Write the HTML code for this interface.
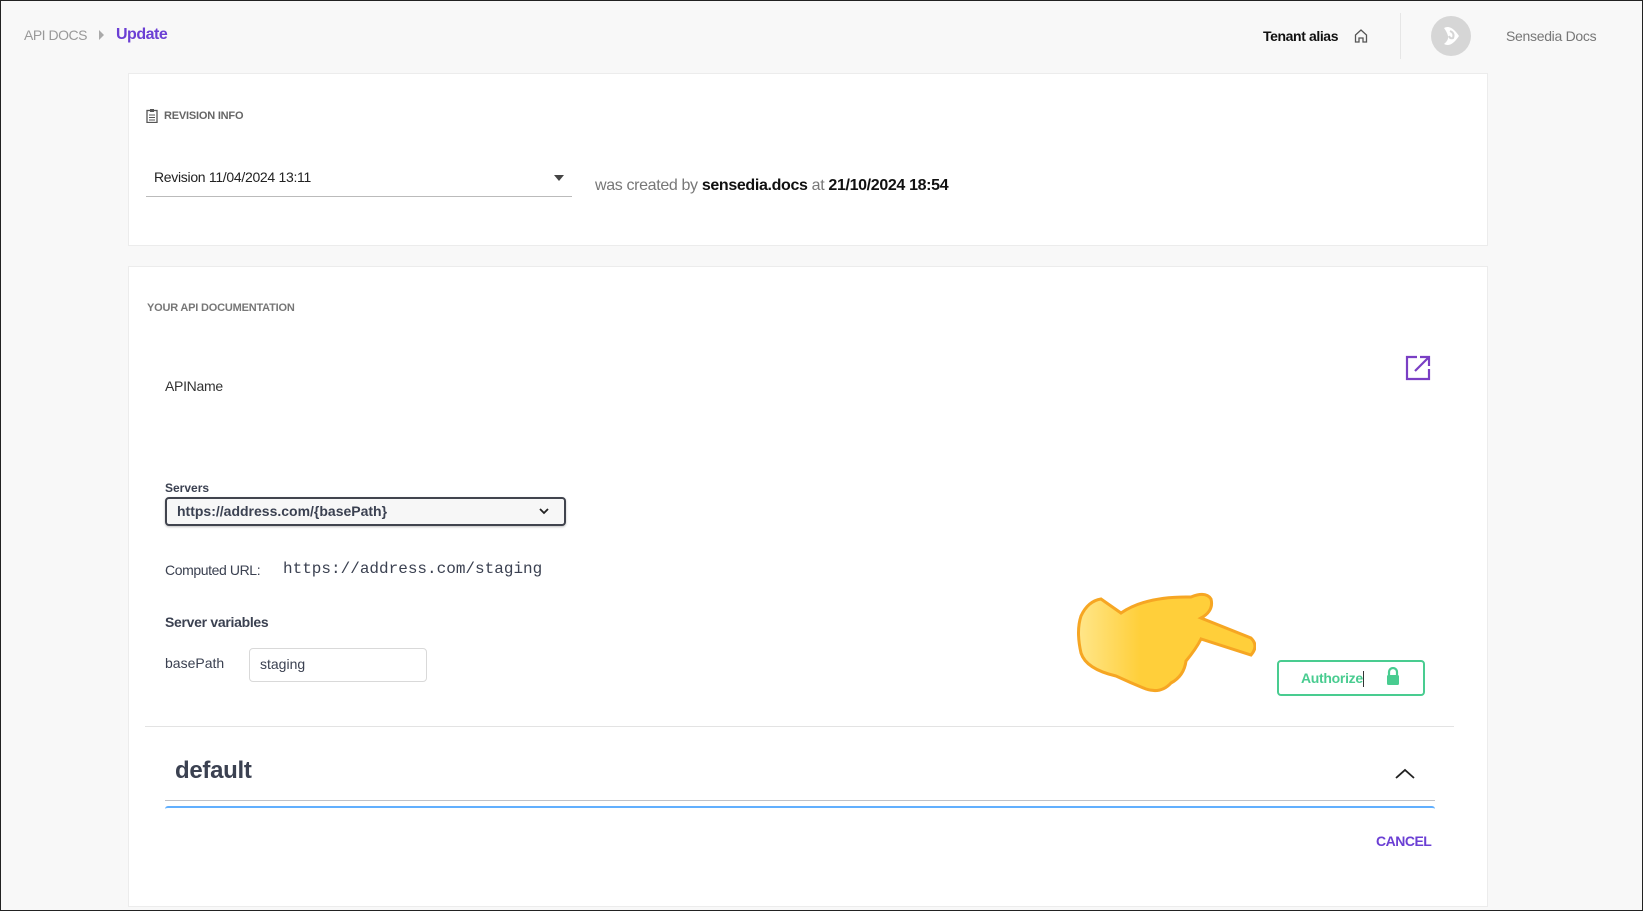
<!DOCTYPE html>
<html><head><meta charset="utf-8"><style>
*{margin:0;padding:0;box-sizing:border-box}
body{width:1643px;height:911px;background:#f8f8f8;font-family:"Liberation Sans",Arial,sans-serif;position:relative;overflow:hidden;border:1px solid #222}
.a{position:absolute;white-space:nowrap}
.card{position:absolute;background:#fff;border:1px solid #ececec}
</style></head><body>
<div class="a" style="left:23px;top:26px;font-size:14px;color:#999;letter-spacing:-0.5px">API DOCS</div>
<svg class="a" style="left:97px;top:29px" width="8" height="10"><path d="M1 0 L6 5 L1 10Z" fill="#aaa"/></svg>
<div class="a" style="left:115px;top:25px;font-size:16px;font-weight:bold;color:#6b3fd4;letter-spacing:-0.5px">Update</div>
<div class="a" style="left:1262px;top:27px;font-size:14px;font-weight:bold;color:#111;letter-spacing:-0.4px">Tenant alias</div>
<svg class="a" style="left:1352px;top:27px" width="16" height="16" viewBox="0 0 16 16"><path d="M2.5 7 L8 2 L13.5 7 V14 H10 V10 H6 V14 H2.5Z" fill="none" stroke="#555" stroke-width="1.3"/></svg>
<div class="a" style="left:1399px;top:12px;width:1px;height:46px;background:#e6e6e6"></div>
<svg class="a" style="left:1430px;top:15px" width="40" height="40" viewBox="0 0 40 40"><circle cx="20" cy="20" r="20" fill="#d6d6d6"/><path d="M13 12 Q20 8 28 20 Q20 32 13 28 Q18 24 17 20 Q16 16 13 12Z" fill="#fff"/><path d="M19 15 Q24 17 22 22 Q19 23 18 20" fill="none" stroke="#d6d6d6" stroke-width="2"/></svg>
<div class="a" style="left:1505px;top:27px;font-size:14px;color:#777;letter-spacing:-0.3px">Sensedia Docs</div>

<div class="card" style="left:127px;top:72px;width:1360px;height:173px"></div>
<svg class="a" style="left:145px;top:108px" width="12" height="14" viewBox="0 0 12 14"><rect x="1" y="1.5" width="10" height="12" fill="none" stroke="#555" stroke-width="1.3"/><rect x="4" y="0" width="4" height="3" fill="#555"/><path d="M3 6h6M3 8.5h6M3 11h6" stroke="#555"/></svg>
<div class="a" style="left:163px;top:109px;font-size:11px;font-weight:bold;color:#666;letter-spacing:-0.2px">REVISION INFO</div>
<div class="a" style="left:153px;top:168px;font-size:14px;color:#222;letter-spacing:-0.3px">Revision 11/04/2024 13:11</div>
<svg class="a" style="left:553px;top:174px" width="10" height="6"><path d="M0 0H10L5 6Z" fill="#444"/></svg>
<div class="a" style="left:145px;top:195px;width:426px;height:1px;background:#bbb"></div>
<div class="a" style="left:594px;top:176px;font-size:16px;color:#777;letter-spacing:-0.35px">was created by <b style="color:#111">sensedia.docs</b> at <b style="color:#111">21/10/2024 18:54</b></div>

<div class="card" style="left:127px;top:265px;width:1360px;height:641px"></div>
<div class="a" style="left:146px;top:301px;font-size:11px;font-weight:bold;color:#777;letter-spacing:-0.2px">YOUR API DOCUMENTATION</div>
<svg class="a" style="left:1404px;top:354px" width="26" height="26" viewBox="0 0 26 26"><path d="M12 2H2V24H24V14" fill="none" stroke="#7a3fc4" stroke-width="2.2"/><path d="M10 16L23 3M15 2H24V11" fill="none" stroke="#7a3fc4" stroke-width="2.2"/></svg>
<div class="a" style="left:164px;top:377px;font-size:14px;color:#333;letter-spacing:-0.3px">APIName</div>

<div class="a" style="left:164px;top:480px;font-size:12px;font-weight:bold;color:#3b4151">Servers</div>
<div class="a" style="left:164px;top:496px;width:401px;height:29px;border:2px solid #41444e;border-radius:4px;background:#f7f7f7;box-shadow:0 1px 2px rgba(0,0,0,.25)"></div>
<div class="a" style="left:176px;top:502px;font-size:14px;font-weight:bold;color:#3b4151">https://address.com/{basePath}</div>
<svg class="a" style="left:538px;top:507px" width="10" height="7"><path d="M1 1L5 5L9 1" fill="none" stroke="#222" stroke-width="1.8"/></svg>
<div class="a" style="left:164px;top:561px;font-size:14px;color:#3b4151;letter-spacing:-0.4px">Computed URL:</div>
<div class="a" style="left:282px;top:559px;font-family:'Liberation Mono',monospace;font-size:16px;color:#3b4151">https://address.com/staging</div>
<div class="a" style="left:164px;top:613px;font-size:14px;font-weight:bold;color:#3b4151;letter-spacing:-0.3px">Server variables</div>
<div class="a" style="left:164px;top:654px;font-size:14px;color:#3b4151">basePath</div>
<div class="a" style="left:248px;top:647px;width:178px;height:34px;border:1px solid #d9d9d9;border-radius:4px;background:#fff"></div>
<div class="a" style="left:259px;top:655px;font-size:14px;color:#3b4151">staging</div>

<svg class="a" style="left:1075px;top:590px" width="180" height="105" viewBox="0 0 180 105"><defs><linearGradient id="g" x1="0" x2="1"><stop offset="0" stop-color="#ffe68a"/><stop offset=".35" stop-color="#ffcf3a"/></linearGradient></defs><path d="M25 8 L45 22 Q70 5 115 6 Q130 0 135 8 Q138 20 125 27 L175 47 Q183 55 175 64 L125 48 Q120 58 110 70 Q108 85 95 92 Q85 103 70 98 Q55 92 40 85 Q10 78 5 62 Q0 40 5 25 Q12 10 25 8Z" fill="url(#g)" stroke="#f6a623" stroke-width="3"/></svg>

<div class="a" style="left:1276px;top:659px;width:148px;height:36px;border:2px solid #49cc90;border-radius:4px"></div>
<div class="a" style="left:1300px;top:669px;font-size:14px;font-weight:bold;color:#49cc90;letter-spacing:-0.3px">Authorize</div>
<div class="a" style="left:1362px;top:670px;width:1px;height:16px;background:#333"></div>
<svg class="a" style="left:1385px;top:666px" width="14" height="19" viewBox="0 0 14 19"><path d="M3 9V5a4 4 0 0 1 8 0V8" fill="none" stroke="#49cc90" stroke-width="2.2"/><rect x="1" y="8" width="12" height="10" rx="1.5" fill="#49cc90"/></svg>

<div class="a" style="left:144px;top:725px;width:1309px;height:1px;background:#e3e3e3"></div>
<div class="a" style="left:174px;top:756px;font-size:24px;font-weight:bold;color:#3b4151;letter-spacing:-0.3px">default</div>
<svg class="a" style="left:1394px;top:767px" width="20" height="12"><path d="M1 10L10 2L19 10" fill="none" stroke="#222" stroke-width="1.8"/></svg>
<div class="a" style="left:164px;top:799px;width:1270px;height:1px;background:#bfc1c6"></div>
<div class="a" style="left:164px;top:805px;width:1270px;height:3px;border-top:2px solid #61affe;border-radius:4px 4px 0 0"></div>
<div class="a" style="left:1375px;top:832px;font-size:14px;font-weight:bold;color:#6b3fd4;letter-spacing:-0.5px">CANCEL</div>
</body></html>
